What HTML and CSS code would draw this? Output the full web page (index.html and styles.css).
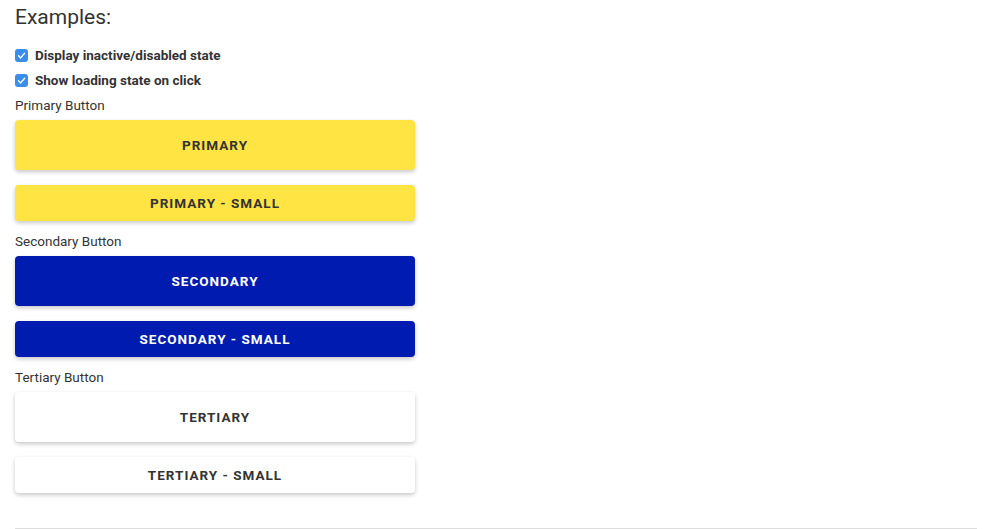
FILE: index.html
```html
<!DOCTYPE html>
<html>
<head>
<meta charset="utf-8">
<link rel="stylesheet" href="styles.css">
</head>
<body>
<div class="page">
  <h2 class="title">Examples:</h2>
  <label class="check"><span class="box"><svg viewBox="0 0 13 13" width="13" height="13"><path d="M3.5 6.8 L5.6 8.9 L9.6 4.3" fill="none" stroke="#fff" stroke-width="1.4" stroke-linecap="round" stroke-linejoin="round"/></svg></span>Display inactive/disabled state</label>
  <label class="check"><span class="box"><svg viewBox="0 0 13 13" width="13" height="13"><path d="M3.5 6.8 L5.6 8.9 L9.6 4.3" fill="none" stroke="#fff" stroke-width="1.4" stroke-linecap="round" stroke-linejoin="round"/></svg></span>Show loading state on click</label>

  <div class="group-label">Primary Button</div>
  <button class="btn primary">PRIMARY</button>
  <button class="btn primary small">PRIMARY - SMALL</button>

  <div class="group-label">Secondary Button</div>
  <button class="btn secondary">SECONDARY</button>
  <button class="btn secondary small">SECONDARY - SMALL</button>

  <div class="group-label">Tertiary Button</div>
  <button class="btn tertiary">TERTIARY</button>
  <button class="btn tertiary small">TERTIARY - SMALL</button>

  <hr class="rule">
</div>
</body>
</html>
```
FILE: styles.css
```css
html, body {
  margin: 0;
  padding: 0;
  background: #fff;
}
body {
  font-family: "Roboto", "Open Sans", sans-serif;
  color: #333;
}
.page {
  display: flex;
  flex-direction: column;
  align-items: flex-start;
  padding: 0 15px;
}
.title {
  margin: 5px 0 0;
  font-size: 21px;
  font-weight: 400;
  line-height: 24px;
  color: #333;
}
.check {
  display: flex;
  align-items: center;
  gap: 7px;
  font-size: 13.5px;
  font-weight: 700;
  height: 25px;
  line-height: 25px;
}
.title + .check {
  margin-top: 13.5px;
}
.box {
  width: 13px;
  height: 13px;
  border-radius: 3px;
  background: #3a8de8;
  display: flex;
}
.group-label {
  font-size: 13.5px;
  height: 24px;
  line-height: 24px;
}
.btn {
  width: 400px;
  height: 50px;
  border: none;
  border-radius: 4px;
  font-family: "Roboto", "Open Sans", sans-serif;
  font-size: 13.5px;
  font-weight: 700;
  letter-spacing: 1px;
  color: #333;
  box-shadow: 0 2px 4px rgba(0, 0, 0, 0.22);
  margin: 3px 0 15px;
  padding: 0;
}
.btn.small {
  height: 36px;
  margin-top: 0;
  margin-bottom: 8px;
}
.primary {
  background: #ffe443;
}
.secondary {
  background: #001cb0;
  color: #fff;
}
.tertiary {
  background: #fff;
}
.rule {
  align-self: stretch;
  margin: 27px 0 0;
  border: none;
  border-top: 1px solid #ddd;
  height: 0;
}
```
